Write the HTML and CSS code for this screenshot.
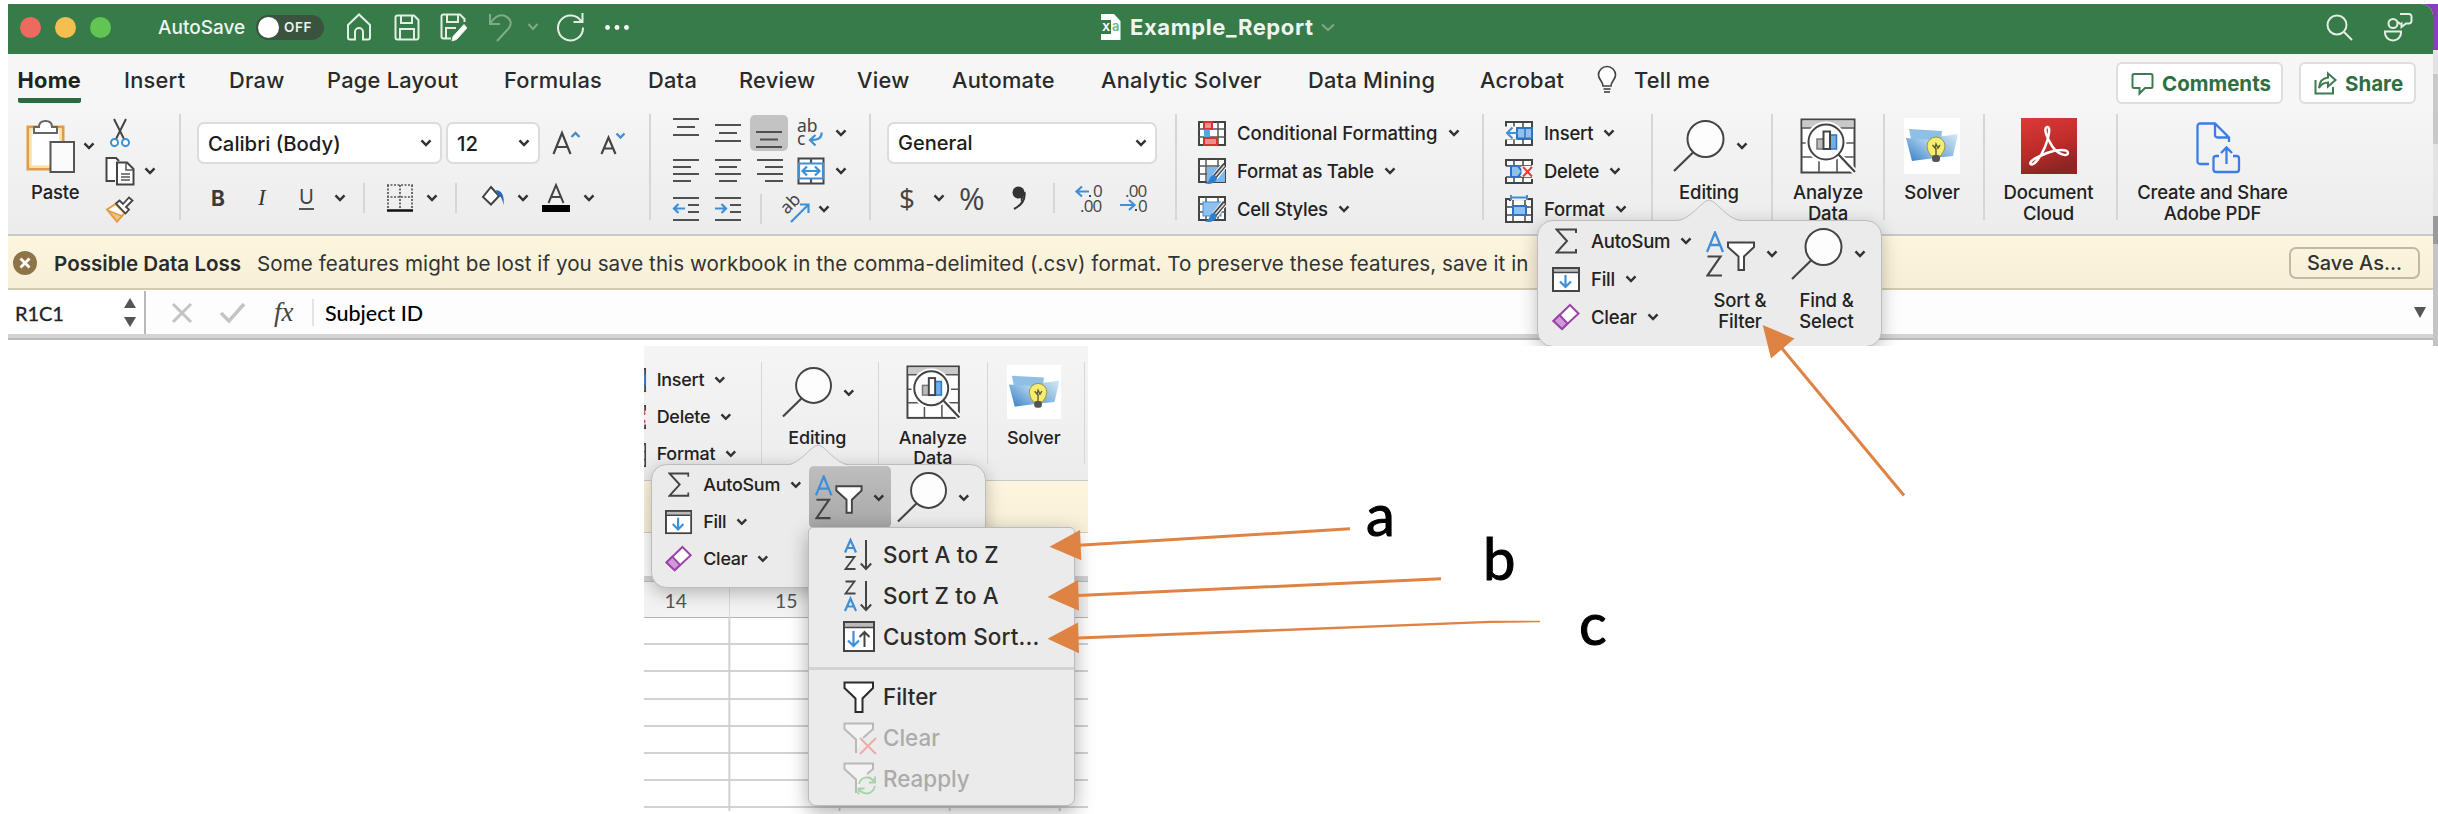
FILE: index.html
```html
<!DOCTYPE html>
<html lang="en">
<head>
<meta charset="utf-8">
<title>Example_Report</title>
<link rel="stylesheet" href="styles.css">
</head>
<body>
<svg class="sprite" aria-hidden="true">
  <defs>
    <linearGradient id="g-blue" x1="0" y1="1" x2="1" y2="0"><stop offset="0" stop-color="#2f7dc6"/><stop offset="1" stop-color="#cfe6f6"/></linearGradient>
    <linearGradient id="g-red" x1="0" y1="0" x2="0.3" y2="1"><stop offset="0" stop-color="#dc3a36"/><stop offset="0.6" stop-color="#bd2c2a"/><stop offset="1" stop-color="#8e2523"/></linearGradient>
  </defs>
  <symbol id="chev" viewBox="0 0 12 8"><path d="M1.5 1.4 6 6 10.500 1.400" fill="none" stroke="currentColor" stroke-width="2.5"/></symbol>
  <symbol id="lens" viewBox="0 0 52 52"><circle cx="32.500" cy="19" r="18" fill="#fdfdfd" stroke="#444" stroke-width="2"/><path d="M20 32.500 1 51" stroke="#444" stroke-width="2.200"/></symbol>
  <symbol id="analyze" viewBox="0 0 56 56"><rect x="1.500" y="1.500" width="53" height="53" fill="#fff" stroke="#444" stroke-width="2"/><rect x="2.500" y="2.500" width="51" height="7" fill="#c9c9c9"/><path d="M2 10H54M2 25H9M46 25H54M2 39H54M19 43V54M37 40V54" stroke="#555" stroke-width="1.600"/><circle cx="26" cy="24" r="18" fill="#fdfdfd" stroke="#fff" stroke-width="5"/><path d="M38 36 56 55" stroke="#fff" stroke-width="6"/><circle cx="26" cy="24" r="17.500" fill="#fdfdfd" stroke="#444" stroke-width="2"/><path d="M38.500 36.500 55 54" stroke="#444" stroke-width="2.200"/><rect x="17" y="21" width="7" height="10" fill="#bbb" stroke="#777" stroke-width="1.500"/><rect x="30" y="17" width="6.500" height="14" fill="#6fb0e8" stroke="#2f74c0" stroke-width="1.500"/><rect x="23.500" y="13.500" width="6.500" height="17.500" fill="#fff" stroke="#444" stroke-width="2"/></symbol>
  <symbol id="solver" viewBox="0 0 56 56"><rect width="56" height="56" fill="#fff"/><path d="M5 11 38 13 36 34 10 36Z" fill="#8ebfe5"/><path d="M2 20 28 22 31 40 8 43Z" fill="url(#g-blue)"/><path d="M26 20 54 16 49 38 30 40Z" fill="url(#g-blue)" opacity=".8"/><path d="M27 38Q23 33 23 28A8.700 8.700 0 0 1 41 28Q41 33 36.500 38Z" fill="#f5ec70" stroke="#9c9440" stroke-width="1"/><path d="M28.500 27 31 30 32 26 34 30 36 27M32 30V38" fill="none" stroke="#5d5a30" stroke-width="1.400"/><rect x="28" y="37" width="8" height="7" rx="3" fill="#555"/></symbol>
  <symbol id="ins" viewBox="0 0 28 25"><rect x="1" y="1" width="26" height="23" fill="#fff" stroke="#444" stroke-width="2"/><path d="M9 1V8M18 1V24M9 18V24M1 18H27M1 7H27" stroke="#444" stroke-width="1.500"/><rect x="-1" y="5.500" width="14" height="13" fill="#f4f4f4"/><rect x="12" y="7" width="15" height="10.500" fill="#8fc0ee" stroke="#2b73c4" stroke-width="2"/><path d="M20 7V17.500" stroke="#2b73c4" stroke-width="1.500"/><path d="M13 12H2M7.500 6.500 2 12 7.500 17.500" fill="none" stroke="#3f8fd6" stroke-width="2"/></symbol>
  <symbol id="del" viewBox="0 0 28 25"><path d="M1 7V1H27V6M1 18V24H27V20" fill="#fff" stroke="#444" stroke-width="2"/><path d="M1 7H27M1 18H27M9 1V7M18 1V7M9 18V24M18 18V24" stroke="#444" stroke-width="1.500"/><path d="M6 7H13L17 12.500 13 18H6Z" fill="#8fc0ee" stroke="#2b73c4" stroke-width="2"/><rect x="16.500" y="7" width="11.500" height="11" fill="#f4f4f4"/><path d="M18 8 27 17.500M27 8 18 17.500" stroke="#e2413b" stroke-width="2"/></symbol>
  <symbol id="fmt" viewBox="0 0 28 28"><path d="M5 4V27M5 4H1V27H27V4H23" fill="none" stroke="#444" stroke-width="2"/><path d="M2 6H26V26H2Z" fill="#fff"/><path d="M8 5V27M20 5V27M1 12H27M1 20H27" stroke="#444" stroke-width="1.500"/><rect x="8" y="11" width="13" height="9" fill="#8fc0ee" stroke="#2b73c4" stroke-width="2"/><path d="M6 2.500H22M6 0V5M22 0V5" stroke="#3f8fd6" stroke-width="2"/></symbol>
  <symbol id="sigma" viewBox="0 0 22 26"><path d="M21 5V1.500H1.500L12 13 1.500 24.500H21V21" fill="none" stroke="#444" stroke-width="2"/></symbol>
  <symbol id="fill" viewBox="0 0 28 25"><rect x="1" y="1" width="26" height="23" fill="#fff" stroke="#444" stroke-width="2"/><rect x="2" y="2" width="24" height="3" fill="#bbb"/><path d="M2 5.500H26" stroke="#444" stroke-width="1.500"/><path d="M13.500 8V20M8 14.500 13.500 20 19 14.500" fill="none" stroke="#3f8fd6" stroke-width="2.200"/></symbol>
  <symbol id="eraser" viewBox="0 0 28 28"><path d="M18 2 26.500 10.500 10 26 1.500 18Z" fill="#fff" stroke="#9a44a8" stroke-width="2"/><path d="M7.500 12 15.500 20.500 10 26 1.500 18Z" fill="#cf9ad8" stroke="#9a44a8" stroke-width="2"/></symbol>
  <symbol id="azfunnel" viewBox="0 0 50 47"><path d="M1 21 9 1.500 17 21M4 14H14" fill="none" stroke="#3f8fd6" stroke-width="2.300"/><path d="M1.500 25.500H14.500L1.500 44.500H16" fill="none" stroke="#444" stroke-width="2.200"/><path d="M22 11.500H48V16L38 25.500V39H32.500V25.500L22 16Z" fill="#fff" stroke="#444" stroke-width="2"/></symbol>
  <symbol id="funnel" viewBox="0 0 32 32"><path d="M1.500 1.500H30V7L19.500 17.500V31H12.500V17.500L1.500 7Z" fill="#fff" stroke="currentColor" stroke-width="2"/></symbol>
  <symbol id="down" viewBox="0 0 12 32"><path d="M6 1V30M.8 24.500 6 30 11.200 24.500" fill="none" stroke="#444" stroke-width="2"/></symbol>
  <symbol id="grid" viewBox="0 0 28 25"><rect x="1" y="1" width="26" height="23" fill="#fff" stroke="#444" stroke-width="2"/><path d="M8 1V24M20 1V24M1 8H27M1 16H27" stroke="#555" stroke-width="1.500"/></symbol>
  <symbol id="brushlet" viewBox="0 0 22 22"><path d="M20.500 2 11 14" stroke="#fff" stroke-width="6.500"/><path d="M21 1.500 10.500 14" stroke="#444" stroke-width="4.500"/><path d="M20.500 2.500 11 13.500" stroke="#ddd" stroke-width="1.500"/><path d="M10 12Q14 14 12 17.500 9 22 1 20.500 5 18.500 5.500 16 7 12 10 12Z" fill="#2f7fd0"/></symbol>
</svg>

<div class="page">
<div class="shot">
<div class="window">
  <header class="titlebar">
    <div class="lights"><i class="red"></i><i class="yellow"></i><i class="green"></i></div>
    <span class="autosave">AutoSave</span>
    <span class="toggle"><i></i><b>OFF</b></span>
    <svg class="ti-home" width="26" height="28" viewBox="0 0 26 28"><path d="M2 12 13 1.500 24 12V24.500A2 2 0 0 1 22 26.500H17V19A4 4 0 0 0 9 19V26.500H4A2 2 0 0 1 2 24.500Z"/></svg>
    <svg class="ti-save" width="26" height="27" viewBox="0 0 26 27"><path d="M1.500 3A2 2 0 0 1 3.500 1.500H20L24.500 6V23A2 2 0 0 1 22.500 25.500H3.500A2 2 0 0 1 1.500 23.500ZM7 1.500V9H18V1.500M6 25.500V15H20V25.500"/></svg>
    <svg class="ti-edit" width="28" height="29" viewBox="0 0 28 29"><path d="M11 25.500H3.500A2 2 0 0 1 1.500 23.500V3A2 2 0 0 1 3.500 1.500H20L24.500 6V9M7 1.500V9H18V1.500M6 25.500V15H16"/><path d="M24 11.500 13 23.500 12 28 16.500 26.500 27 15Z" fill="#fff" stroke-width="1"/></svg>
    <svg class="ti-undo dim" width="25" height="29" viewBox="0 0 25 29"><path d="M2 1V11H12M2 11C7 3 13 1 18 3.500S24 11 21 15L9 28"/></svg>
    <svg class="ti-uchev dim" width="12" height="8"><path d="M1.500 1 6 6 10.500 1"/></svg>
    <svg class="ti-redo" width="29" height="30" viewBox="0 0 29 30"><path d="M25.500 10A12.500 12.500 0 1 0 27 15.500M26.500 1V10H17.500"/></svg>
    <svg class="ti-dots" width="24" height="5"><g fill="#fff" stroke="none"><circle cx="2.500" cy="2.500" r="2.400"/><circle cx="12" cy="2.500" r="2.400"/><circle cx="21.500" cy="2.500" r="2.400"/></g></svg>
    <svg class="ti-doc" width="21" height="26" viewBox="0 0 21 26"><path d="M1 0H14L20.500 7V26H1Z" fill="#fff" stroke="none"/><rect y="6" width="11" height="14" fill="#377b49" stroke="none"/><text x="2" y="16.500" class="doc-x">X</text><text x="12" y="17" class="doc-a">a</text></svg>
    <span class="doc-title">Example_Report</span>
    <svg class="ti-tchev dim" width="14" height="9"><path d="M1 1.500 7 7 13 1.500"/></svg>
    <svg class="ti-search" width="27" height="27" viewBox="0 0 27 27"><circle cx="11" cy="11" r="9.500"/><path d="M18 18 26 26"/></svg>
    <svg class="ti-user" width="30" height="30" viewBox="0 0 30 30"><circle cx="10" cy="11.500" r="4.500"/><path d="M2 19.500H18V21A8 7.500 0 0 1 2 21ZM17 2H26A2.500 2.500 0 0 1 28.500 4.500V9A2.500 2.500 0 0 1 26 11.500H23L18.500 15V11.500A2 2 0 0 1 15.500 9.500"/></svg>
  </header>

  <nav class="tabs">
    <span class="tab active">Home</span><span class="tab">Insert</span><span class="tab">Draw</span><span class="tab">Page Layout</span><span class="tab">Formulas</span><span class="tab">Data</span><span class="tab">Review</span><span class="tab">View</span><span class="tab">Automate</span><span class="tab">Analytic Solver</span><span class="tab">Data Mining</span><span class="tab">Acrobat</span>
    <svg class="bulb" width="20" height="28" viewBox="0 0 20 28"><path d="M6 20C6 15 1.500 14 1.500 9A8.500 8.500 0 0 1 18.500 9C18.500 14 14 15 14 20Z" fill="#fff" stroke="#444" stroke-width="1.700"/><path d="M6.500 23H13.500M7 26H13" stroke="#666" stroke-width="2"/></svg>
    <span class="tab">Tell me</span>
    <span class="pill comments"><svg width="23" height="23" viewBox="0 0 23 23"><path d="M3 2H20A1.500 1.500 0 0 1 21.500 3.500V14.500A1.500 1.500 0 0 1 20 16H14L8.500 21.500V16H3A1.500 1.500 0 0 1 1.500 14.500V3.500A1.500 1.500 0 0 1 3 2Z"/></svg>Comments</span>
    <span class="pill share"><svg width="23" height="23" viewBox="0 0 23 23"><path d="M1.500 8V21.500H19V15M14 1.500 21.500 8 14 14.500V10.500Q8 10.500 5 16 5.500 6.500 14 5.500Z"/></svg>Share</span>
  </nav>

  <div class="ribbon">
    <section class="group clip">
      <div class="big">
        <div class="face"><svg width="49" height="54" viewBox="0 0 49 54"><rect x="2" y="8" width="35" height="42" fill="#fff" stroke="#e59a45" stroke-width="3"/><rect x="4.500" y="10.500" width="30" height="37" fill="none" stroke="#fbe3a6" stroke-width="2.500"/><path d="M8 14V8H13Q13 2 19.500 2T26 8H31V14Z" fill="#fff" stroke="#666" stroke-width="2"/><rect x="24.500" y="23" width="23.500" height="30" fill="#fbfbfb" stroke="#555" stroke-width="2"/></svg><svg class="chev"><use href="#chev"/></svg></div>
        <div class="label paste-label">Paste</div>
      </div>
      <div class="rows">
        <div class="row"><svg class="scissors" width="20" height="30" viewBox="0 0 20 30"><path d="M4 1 14 21M16 1 6 21" fill="none" stroke="#444" stroke-width="2"/><circle cx="4.500" cy="24.500" r="3.500" fill="#fff" stroke="#3f8fd6" stroke-width="2"/><circle cx="15.500" cy="24.500" r="3.500" fill="#fff" stroke="#3f8fd6" stroke-width="2"/></svg></div>
        <div class="row"><svg width="30" height="30" viewBox="0 0 30 30"><path d="M10 25H1.500V2H11L14 5" fill="#fff" stroke="#444" stroke-width="2"/><path d="M12 6.500H22L28.500 13V28.500H12Z" fill="#fff" stroke="#444" stroke-width="2"/><path d="M21 6.500V14H28.500M16 18H25M16 21H25M16 24H25" fill="none" stroke="#555" stroke-width="1.500"/></svg><svg class="chev"><use href="#chev"/></svg></div>
        <div class="row"><svg width="30" height="28" viewBox="0 0 30 28"><path d="M2 14.500 10.500 9 19.500 18 12 26.500Z" fill="#fff" stroke="#e59a45" stroke-width="2"/><path d="M3 15.500 17 21 12 26.500Z" fill="#f3c27c" stroke="#e59a45" stroke-width="1.500"/><path d="M11 8.500 14.500 5.500 18 9 24 2.500 27.500 5.500 21 12 24 14.500 20.500 18.500Z" fill="#fff" stroke="#444" stroke-width="1.800"/></svg></div>
      </div>
    </section>

    <section class="group font">
      <div class="combos"><span class="combo face-name">Calibri (Body)<svg class="chev"><use href="#chev"/></svg></span><span class="combo size">12<svg class="chev"><use href="#chev"/></svg></span>
        <svg width="29" height="26" viewBox="0 0 29 26"><path d="M1.500 24 10 3 18.500 24M4.500 17H15.500" fill="none" stroke="#444" stroke-width="2.200"/><path d="M19.500 7 23.500 3 27.500 7" fill="none" stroke="#3f8fd6" stroke-width="2.400"/></svg>
        <svg width="26" height="26" viewBox="0 0 26 26"><path d="M1.500 24 8.500 7.500 15.500 24M4 18.500H13" fill="none" stroke="#444" stroke-width="2.200"/><path d="M16.500 3.500 20.500 7.500 24.500 3.500" fill="none" stroke="#3f8fd6" stroke-width="2.400"/></svg></div>
      <div class="tools font-tools">
        <b class="g-b">B</b><i class="g-i">I</i><span class="g-u">U</span><svg class="chev"><use href="#chev"/></svg><i class="rule"></i>
        <svg width="28" height="28" viewBox="0 0 28 28"><path d="M1 1H27M1 13H27M2 1V24M14 1V24M26 1V24" stroke="#555" stroke-width="1.700" stroke-dasharray="2 1.500"/><path d="M1 26.500H27" stroke="#111" stroke-width="2.500"/></svg><svg class="chev"><use href="#chev"/></svg><i class="rule"></i>
        <svg class="bucket" width="26" height="24" viewBox="0 0 26 24"><path d="M10 3 18 12 10 20.500 2 13Z" fill="#fff" stroke="#444" stroke-width="2"/><path d="M15 6Q24 7 22.500 21 21 12 16 10Z" fill="#2b66b8"/></svg><svg class="chev"><use href="#chev"/></svg>
        <svg width="28" height="30" viewBox="0 0 28 30"><path d="M6.500 20 14 2 21.500 20M9 14H19" fill="none" stroke="#444" stroke-width="2"/><rect y="22" width="28" height="7" fill="#000"/></svg><svg class="chev"><use href="#chev"/></svg>
      </div>
    </section>

    <section class="group align">
      <div class="row align-row">
        <svg width="26" height="32"><path d="M0 2H26M4 10H22M0 18H26"/></svg>
        <svg width="26" height="32"><path d="M0 8H26M4 16H22M0 24H26"/></svg>
        <span class="picked"><svg width="26" height="32"><path d="M0 15H26M4 22.500H22M0 30H26"/></svg></span>
        <svg width="27" height="32" viewBox="0 0 27 32"><text x="0" y="14.500" class="ic-text">ab</text><text x="0" y="28" class="ic-text">c</text><path d="M24.500 15.500Q25.500 23 14 23M18.500 18 13 23 18.500 28.500" fill="none" class="blue"/></svg>
        <svg class="chev"><use href="#chev"/></svg>
      </div>
      <div class="row align-row">
        <svg width="26" height="26"><path d="M0 2H26M0 9H18M0 16H26M0 23H18"/></svg>
        <svg width="26" height="26"><path d="M0 2H26M4 9H22M0 16H26M4 23H22"/></svg>
        <svg class="in-box" width="26" height="26"><path d="M0 2H26M8 9H26M0 16H26M8 23H26"/></svg>
        <svg class="merge" width="28" height="28" viewBox="0 0 28 28"><rect x="1.500" y="1.500" width="25" height="25" fill="#fff"/><path d="M14 1V6M14 22V27" /><path d="M2 6.500H26V21.500H2ZM6 14H22M10 9.500 5.500 14 10 18.500M18 9.500 22.500 14 18 18.500" fill="none" class="blue"/></svg>
        <svg class="chev"><use href="#chev"/></svg>
      </div>
      <div class="row align-row orient-row">
        <svg width="26" height="26"><path d="M0 2H26M15 9H26M15 16H26M0 24H26"/><path class="blue" fill="none" d="M12 12.500H1M5.500 8 1 12.500 5.500 17"/></svg>
        <svg width="26" height="26"><path d="M0 2H26M15 9H26M15 16H26M0 24H26"/><path class="blue" fill="none" d="M0 12.500H11M6.500 8 11 12.500 6.500 17"/></svg>
        <i class="rule"></i>
        <svg width="32" height="30" viewBox="0 0 32 30"><text x="7" y="21" class="ic-text" transform="rotate(-45 7 21)">ab</text><path class="blue" fill="none" d="M11 28 28 11M20 10.500H28.500V19"/></svg>
        <svg class="chev"><use href="#chev"/></svg>
      </div>
    </section>

    <section class="group number">
      <div class="combos"><span class="combo general">General<svg class="chev"><use href="#chev"/></svg></span></div>
      <div class="tools num-tools"><span class="g-dollar">$</span><svg class="chev"><use href="#chev"/></svg><span class="g-pct">%</span>
        <svg width="14" height="24" viewBox="0 0 14 24"><circle cx="6.500" cy="6.500" r="6" fill="#333"/><path d="M12.500 6Q14 17 2 23" fill="none" stroke="#333" stroke-width="2"/><path d="M8 2 13 7 9 17Z" fill="#333"/></svg>
        <i class="rule"></i>
        <svg width="28" height="30" viewBox="0 0 28 30"><text x="18" y="14" class="ic-num">0</text><text x="5" y="28.500" class="ic-num">.00</text><rect x="14" y="12" width="2" height="2" fill="#444"/><path d="M14 8.500H1.500M7 3.500 1.500 8.500 7 13.500" fill="none" class="blue"/></svg>
        <svg width="28" height="30" viewBox="0 0 28 30"><text x="5" y="14" class="ic-num">.00</text><text x="18" y="28.500" class="ic-num">0</text><rect x="15" y="26" width="2" height="2" fill="#444"/><path d="M0 22H14M9 17 14.500 22 9 27" fill="none" class="blue"/></svg></div>
    </section>

    <section class="group styles">
      <div class="row cmd"><svg width="28" height="25"><use href="#grid"/><rect x="6" y="1" width="8" height="7" fill="#ee8f8c" stroke="#d6352f" stroke-width="2"/><rect x="6" y="8.500" width="6" height="8" fill="#58a5e6"/><rect x="6" y="17" width="13" height="7" fill="#ee8f8c" stroke="#d6352f" stroke-width="2"/></svg><span>Conditional Formatting</span><svg class="chev"><use href="#chev"/></svg></div>
      <div class="row cmd snug"><svg width="28" height="26"><use href="#grid" width="28" height="25"/><rect x="9" y="9" width="18" height="15" fill="#7db9ee"/><use href="#brushlet" x="6" y="5" width="22" height="22"/></svg><span>Format as Table</span><svg class="chev"><use href="#chev"/></svg></div>
      <div class="row cmd snug"><svg width="28" height="26"><use href="#grid" width="28" height="25"/><rect x="5" y="6" width="18" height="14" fill="#8fc0ee" stroke="#3f8fd6"/><use href="#brushlet" x="6" y="5" width="22" height="22"/></svg><span>Cell Styles</span><svg class="chev"><use href="#chev"/></svg></div>
    </section>

    <section class="group cells">
      <div class="row cmd snug"><svg width="28" height="25"><use href="#ins"/></svg><span>Insert</span><svg class="chev"><use href="#chev"/></svg></div>
      <div class="row cmd snug"><svg width="28" height="25"><use href="#del"/></svg><span>Delete</span><svg class="chev"><use href="#chev"/></svg></div>
      <div class="row cmd snug"><svg width="28" height="28"><use href="#fmt"/></svg><span>Format</span><svg class="chev"><use href="#chev"/></svg></div>
    </section>
    <section class="group big editing"><div class="face"><svg width="52" height="52"><use href="#lens"/></svg><svg class="chev"><use href="#chev"/></svg></div><div class="label">Editing</div></section>
    <section class="group big analyze"><div class="face"><svg width="56" height="56"><use href="#analyze"/></svg></div><div class="label">Analyze<br>Data</div></section>
    <section class="group big solver"><div class="face"><svg width="56" height="56"><use href="#solver"/></svg></div><div class="label">Solver</div></section>
    <section class="group big cloud"><div class="face"><svg width="56" height="56" viewBox="0 0 56 56"><rect width="56" height="56" fill="url(#g-red)"/><path d="M26 9C22 10 26 20 31 28 37 37 47 39 47 35 47 31 36 31 26 35 16 39 8 43 9.500 46 12 49 20 39 24 29 28 19 30 8 26 9Z" fill="none" stroke="#fff" stroke-width="2.500"/></svg></div><div class="label">Document<br>Cloud</div></section>
    <section class="group big pdf"><div class="face"><svg width="45" height="52" viewBox="0 0 45 52"><g fill="none" stroke="#3b7de6" stroke-width="2.300"><path d="M13 42H4A2.500 2.500 0 0 1 1.500 39.500V4A2.500 2.500 0 0 1 4 1.500H19L33 15.500V20M19 1.500V13A2.500 2.500 0 0 0 21.500 15.500H33"/><path d="M23 34H20A2.500 2.500 0 0 0 17.500 36.500V47.500A2.500 2.500 0 0 0 20 50H40.500A2.500 2.500 0 0 0 43 47.500V36.500A2.500 2.500 0 0 0 40.500 34H37M30.500 42V25.500M25 31 30.500 25.500 36 31"/></g></svg></div><div class="label">Create and Share<br>Adobe PDF</div></section>
  </div>

  <div class="warning"><svg width="26" height="26" viewBox="0 0 26 26"><circle cx="13" cy="13" r="12" fill="#8f7449"/><path d="M8.500 8.500 17.500 17.500M17.500 8.500 8.500 17.500" stroke="#fff" stroke-width="2.800"/></svg><strong>Possible Data Loss</strong><span class="warn-text">Some features might be lost if you save this workbook in the comma-delimited (.csv) format. To preserve these features, save it in</span><span class="save-as">Save As...</span></div>

  <div class="formula">
    <div class="namebox"><span>R1C1</span><svg width="12" height="30"><path d="M0 10 6 0 12 10ZM0 19H12L6 29Z" fill="#555"/></svg></div>
    <svg class="f-x" width="20" height="20"><path d="M1 1 19 19M19 1 1 19" stroke="#c4c4c4" stroke-width="3"/></svg>
    <svg class="f-ok" width="25" height="20"><path d="M1 10 9 18 24 1" fill="none" stroke="#c4c4c4" stroke-width="3.500"/></svg>
    <i class="fx">fx</i><span class="cell-text">Subject ID</span>
    <svg class="f-down" width="12" height="11"><path d="M0 0H12L6 11Z" fill="#555"/></svg>
  </div>
  <div class="strip"></div>

  <div class="popup popup-main">
    <svg class="beak" width="64" height="23" viewBox="0 0 64 23"><path d="M0 22C14 21 24 2 32 1 40 2 50 21 64 22V23H0Z" fill="#ebebeb"/><path d="M0 21.500C14 20.500 24 2 32 1 40 2 50 20.500 64 21.500" fill="none" stroke="#bdbdbd" stroke-width="1"/></svg>
    <div class="list">
      <div class="row cmd snug"><svg class="sig" width="22" height="26"><use href="#sigma"/></svg><span>AutoSum</span><svg class="chev"><use href="#chev"/></svg></div>
      <div class="row cmd snug"><svg width="28" height="25"><use href="#fill"/></svg><span>Fill</span><svg class="chev"><use href="#chev"/></svg></div>
      <div class="row cmd snug"><svg width="28" height="28"><use href="#eraser"/></svg><span>Clear</span><svg class="chev"><use href="#chev"/></svg></div>
    </div>
    <div class="pop-btn"><div class="pop-face"><svg width="50" height="47"><use href="#azfunnel"/></svg><svg class="chev"><use href="#chev"/></svg></div><div class="label">Sort &amp;<br>Filter</div></div>
    <div class="pop-btn find"><div class="pop-face"><svg width="52" height="52"><use href="#lens"/></svg><svg class="chev"><use href="#chev"/></svg></div><div class="label">Find &amp;<br>Select</div></div>
  </div>
</div>
</div>

<div class="detail">
  <div class="detail-view">
    <div class="ribbon">
      <section class="group cells">
        <div class="row cmd snug"><svg width="28" height="25"><use href="#ins"/></svg><span>Insert</span><svg class="chev"><use href="#chev"/></svg></div>
        <div class="row cmd snug"><svg width="28" height="25"><use href="#del"/></svg><span>Delete</span><svg class="chev"><use href="#chev"/></svg></div>
        <div class="row cmd snug"><svg width="28" height="28"><use href="#fmt"/></svg><span>Format</span><svg class="chev"><use href="#chev"/></svg></div>
      </section>
      <section class="group big editing"><div class="face"><svg width="52" height="52"><use href="#lens"/></svg><svg class="chev"><use href="#chev"/></svg></div><div class="label">Editing</div></section>
      <section class="group big analyze"><div class="face"><svg width="56" height="56"><use href="#analyze"/></svg></div><div class="label">Analyze<br>Data</div></section>
      <section class="group big solver"><div class="face"><svg width="56" height="56"><use href="#solver"/></svg></div><div class="label">Solver</div></section>
      <section class="group cloud"></section>
    </div>
    <div class="warning"></div>
    <div class="formula"></div>
    <div class="strip"></div>
    <div class="cols"><span>14</span><span>15</span><span></span><span></span><span></span></div>
    <div class="cells-grid"></div>
    <div class="popup popup-detail">
      <svg class="beak" width="64" height="23" viewBox="0 0 64 23"><path d="M0 22C14 21 24 2 32 1 40 2 50 21 64 22V23H0Z" fill="#ebebeb"/><path d="M0 21.500C14 20.500 24 2 32 1 40 2 50 20.500 64 21.500" fill="none" stroke="#bdbdbd" stroke-width="1"/></svg>
      <div class="list">
        <div class="row cmd snug"><svg class="sig" width="22" height="26"><use href="#sigma"/></svg><span>AutoSum</span><svg class="chev"><use href="#chev"/></svg></div>
        <div class="row cmd snug"><svg width="28" height="25"><use href="#fill"/></svg><span>Fill</span><svg class="chev"><use href="#chev"/></svg></div>
        <div class="row cmd snug"><svg width="28" height="28"><use href="#eraser"/></svg><span>Clear</span><svg class="chev"><use href="#chev"/></svg></div>
      </div>
      <div class="pop-btn"><div class="pop-face pressed"><svg width="50" height="47"><use href="#azfunnel"/></svg><svg class="chev"><use href="#chev"/></svg></div></div>
      <div class="pop-btn find"><div class="pop-face"><svg width="52" height="52"><use href="#lens"/></svg><svg class="chev"><use href="#chev"/></svg></div></div>
    </div>
  </div>
  <div class="menu">
    <div class="item"><svg width="32" height="32"><path d="M2 13.500 7.500 1 13 13.500M4 9H11" fill="none" stroke="#3f8fd6" stroke-width="2.200"/><path d="M2.500 18H11.500L2.500 30H12.500" fill="none" stroke="#444" stroke-width="1.800"/><use href="#down" x="17" y="0" width="12" height="32"/></svg>Sort A to Z</div>
    <div class="item"><svg width="32" height="32"><path d="M2.500 1.500H11.500L2.500 13.500H12.500" fill="none" stroke="#444" stroke-width="1.800"/><path d="M2 31 7.500 18.500 13 31M4 26.500H11" fill="none" stroke="#3f8fd6" stroke-width="2.200"/><use href="#down" x="17" y="0" width="12" height="32"/></svg>Sort Z to A</div>
    <div class="item"><svg width="32" height="31"><rect x="1" y="1" width="30" height="29" fill="#fff" stroke="#444" stroke-width="2"/><rect x="2" y="2" width="28" height="4" fill="#bbb"/><path d="M2 6.500H30" stroke="#444" stroke-width="1.500"/><path d="M10.500 10V25M5 19.500 10.500 25 16 19.500" fill="none" stroke="#3f8fd6" stroke-width="2.200"/><path d="M21.500 26V11M16.500 16 21.500 11 26.500 16" fill="none" stroke="#444" stroke-width="2"/></svg>Custom Sort...</div>
    <hr>
    <div class="item tight"><svg width="32" height="32"><use href="#funnel"/></svg>Filter</div>
    <div class="item tight off"><svg width="33" height="32"><path d="M13 31V17.500L1.500 7V1.500H30V7L20 16" fill="#f3f3f3" stroke="#b9b9b9" stroke-width="2"/><path d="M17 16 33 32M33 16 17 32" stroke="#efaaa6" stroke-width="1.800"/></svg>Clear</div>
    <div class="item tight off"><svg width="33" height="33"><path d="M13 31V17.500L1.500 7V1.500H30V7L24 12" fill="#f3f3f3" stroke="#b9b9b9" stroke-width="2"/><path d="M16 22Q18 15 25 15.500 29 16 31.500 20M32 14.500V20.500H26M32 24Q30 31 24 31.500 19 31.500 16 27M15.500 32.500V26.500H21.500" fill="none" stroke="#a5d3a8" stroke-width="1.800"/></svg>Reapply</div>
  </div>
</div>

<svg class="arrows" width="2438" height="814" viewBox="0 0 2438 814">
  <g fill="#df8344" stroke="none"><path d="M1049.500 546.700 1080 530 1081.300 560.300Z"/><path d="M1047.500 597 1078 580 1079 610.800Z"/><path d="M1047.500 638.700 1078 622.400 1079 653.200Z"/><path d="M1762.700 325 1794.500 338.500 1771 358.500Z"/><path d="M1078 636.500 1490 620.700 1540 620.700V622.300L1490 623 1078 639.500Z"/></g>
  <g stroke="#df8344" stroke-width="3"><path d="M1079 545.200 1350 528.800M1078 595.500 1441 578.800M1780 346 1904 495.500"/></g>
</svg>
<span class="note note-a">a</span><span class="note note-b">b</span><span class="note note-c">c</span>
</div>
</body>
</html>
```
FILE: styles.css
```css
* { box-sizing: border-box; }
body { margin: 0; background: #fff; font-family: Inter, "Liberation Sans", sans-serif; color: #222; }
svg { display: block; flex: none; overflow: visible; }
.sprite { position: absolute; width: 0; height: 0; }
.page { position: relative; width: 2438px; height: 814px; overflow: hidden; padding-top: 4px; }
.chev { width: 12px; height: 8px; color: #333; }

.shot { margin-left: 8px; height: 342px; background: linear-gradient(#8b3fb5 0 46px, #e3e3e3 46px 70px, #c9c9c9 70px 140px, #e4e4e4 140px 212px, #9a9a9a 212px 240px, #c4c4c4 240px); overflow: hidden; }
.window { position: relative; width: 2425px; height: 342px; border-radius: 0 12px 0 0; overflow: hidden; background: #fff; }

.titlebar { display: flex; align-items: center; height: 50px; padding-bottom: 4px; background: #377b49; color: #eef4ef; }
.titlebar svg { fill: none; stroke: #e4eee6; stroke-width: 2; }
.titlebar .dim { opacity: .42; }
.lights { display: flex; gap: 14px; margin-left: 12px; }
.lights i { width: 21px; height: 21px; border-radius: 50%; }
.red { background: #ed6a5e; }
.yellow { background: #f5bf4f; }
.green { background: #61c554; }
.autosave { width: 98px; margin-left: 47px; font-size: 19px; font-weight: 500; }
.toggle { display: flex; align-items: center; width: 68px; height: 25px; border-radius: 13px; background: #39533f; }
.toggle i { width: 21px; height: 21px; margin-left: 2px; border-radius: 50%; background: #fff; }
.toggle b { margin-left: 5px; font-size: 13.500px; font-weight: 600; letter-spacing: .6px; }
.ti-home { margin-left: 22px; }
.ti-save { margin-left: 22px; }
.ti-edit { margin-left: 20px; }
.ti-undo { margin-left: 20px; }
.ti-uchev { margin-left: 14px; }
.ti-redo { margin-left: 17px; }
.ti-dots { margin-left: 20px; }
.ti-doc { margin-left: 471px; }
.doc-x { font: 700 11px Inter, sans-serif; fill: #fff; stroke: none; }
.doc-a { font: 600 13px Inter, sans-serif; fill: #6db58a; stroke: none; }
.doc-title { width: 191px; margin-left: 9px; font-size: 22px; font-weight: 700; letter-spacing: .6px; white-space: nowrap; }
.ti-search { margin-left: 991px; }
.ti-user { margin-left: 30px; }

.tabs { display: grid; grid-template-columns: 106.500px 105px 98px 177px 144px 91px 118px 95px 149px 207px 172px 117px 37px 483px 183px 116px; height: 58px; padding-left: 9.500px; background: #f6f6f6; font-size: 21.800px; font-weight: 500; letter-spacing: .25px; color: #2a2a2a; white-space: nowrap; }
.tab { justify-self: start; height: 49px; padding-top: 13px; line-height: 26px; }
.active { font-weight: 700; color: #222; border-bottom: 5px solid #2a6b3c; border-radius: 0 0 2px 2px; }
.bulb { margin-top: 12px; }
.pill { display: flex; align-items: center; gap: 8px; height: 42px; margin-top: 8px; margin-left: -1px; padding-left: 13px; border: 2px solid #dedede; border-radius: 6px; background: #fff; color: #2f6e43; font-size: 20.500px; font-weight: 700; letter-spacing: 0; }
.pill svg { fill: none; stroke: #3d7b50; stroke-width: 2; }
.comments { width: 167px; }

.ribbon { display: flex; height: 124px; padding-top: 2px; background: linear-gradient(#f5f5f5, #ececec); border-bottom: 2px solid #c9c9c9; }
.group { height: 106px; border-left: 2px solid #d6d6d6; flex: none; }
.clip { display: flex; width: 171px; border-left: 0; padding-left: 18px; }
.font { width: 470px; }
.align { width: 220px; padding-left: 22px; }
.number { width: 306px; }
.styles { width: 307px; padding-left: 21px; }
.cells { width: 169px; padding-left: 21px; }
.big { display: flex; flex-direction: column; align-items: center; }
.face { display: flex; flex: none; align-items: center; gap: 11px; height: 68px; padding-bottom: 4px; }
.clip .face { gap: 8px; }
.label { font-size: 18.500px; font-weight: 500; line-height: 21px; text-align: center; white-space: nowrap; letter-spacing: -.15px; color: #222; }
.paste-label { align-self: flex-start; margin-left: 5px; }
.editing { width: 120px; padding-right: 4px; }
.editing .label { margin-left: -2px; }
.analyze { width: 112px; }
.solver { width: 100px; padding-right: 4px; }
.cloud { width: 133px; padding-right: 4px; }
.pdf { width: 193px; padding-right: 2px; }
.pdf .face { margin-left: 11px; padding-bottom: 0; }
.rows { margin-left: 10px; }
.row { display: flex; align-items: center; height: 38px; }
.clip .row { gap: 9px; }
.scissors { margin-left: 5px; }
.cmd { font-size: 18.500px; font-weight: 500; white-space: nowrap; }
.cmd span { margin: 0 11px; }
.snug span { margin-right: 10px; letter-spacing: -.25px; }

.combos { display: flex; align-items: center; margin: 8px 0 0 16px; height: 42px; }
.combo { display: flex; align-items: center; justify-content: space-between; height: 42px; padding: 0 8px 0 9px; border: 2px solid #dcdcdc; border-radius: 7px; background: #fff; font-size: 20.300px; font-weight: 500; color: #1c1c1c; }
.face-name { width: 245px; }
.size { width: 94px; margin-left: 4px; margin-right: 12px; }
.size + svg { margin-right: 19px; }
.general { width: 270px; font-size: 20px; }
.tools { display: grid; align-items: center; justify-items: start; height: 30px; margin-top: 19px; }
.font-tools { grid-template-columns: 46px 42px 35px 29px 23px 40px 29px 26px 36px 25px 41px 20px; margin-left: 30px; }
.num-tools { grid-template-columns: 34px 26px 53px 41px 22px 45px 30px; margin-left: 28px; }
.g-b { font-size: 21px; font-weight: 700; color: #3a3a3a; }
.g-i { font: italic 23px "Liberation Serif", serif; margin-left: 1px; color: #3a3a3a; }
.g-u { font-size: 20px; line-height: 21px; border-bottom: 2px solid #555; color: #444; }
.rule { width: 2px; height: 30px; background: #d6d6d6; }
.bucket { margin-top: -4px; }
.g-dollar { font: 28px "Open Sans", sans-serif; line-height: 30px; color: #444; }
.g-pct { font: 31px "Open Sans", sans-serif; line-height: 30px; color: #444; }
.align-row { display: grid; grid-template-columns: 42px 35px 47px 38px 12px; align-items: center; }
.align-row > svg path, .picked svg path { stroke: #505050; stroke-width: 2.200; }
.align-row .merge { margin-left: 0; }
.align-row .merge rect { stroke: #444; stroke-width: 2; }
.orient-row { grid-template-columns: 42px 45px 20px 38px 12px; }
.picked { display: flex; align-items: center; justify-content: center; width: 38px; height: 36px; border-radius: 5px; background: #c3c3c3; }
.in-box { margin-left: 7px; }
svg .blue, .align-row > svg path.blue { stroke: #3f8fd6; stroke-width: 2.200; }
.align-row > .chev path { stroke: currentColor; }
.ic-text { font: 17.500px "Noto Sans", sans-serif; fill: #444; }
.ic-num { font: 17px "Open Sans", sans-serif; fill: #444; letter-spacing: -.8px; }

.warning { display: flex; align-items: center; height: 54px; border-bottom: 2px solid #d2cbb4; background: linear-gradient(#fdf6df, #f7efd8); padding: 2px 0 0 4px; font-size: 20.600px; color: #333; white-space: nowrap; }
.warning strong { width: 203px; margin-left: 16px; padding-top: 1px; font-weight: 600; color: #2b2b2b; }
.warn-text { padding-top: 1px; letter-spacing: .06px; }
.save-as { width: 131px; height: 32px; margin-left: auto; margin-right: 13px; border: 2px solid #bfb9a6; border-radius: 7px; text-align: center; font-size: 20px; line-height: 29px; font-weight: 500; }

.formula { display: flex; align-items: center; height: 44px; padding-top: 1px; background: #fdfdfd; }
.namebox { display: flex; align-items: center; justify-content: space-between; width: 138px; height: 43px; padding: 0 8px 0 7px; border-right: 2px solid #b9b9b9; background: #fff; font: 20px Lato, sans-serif; color: #222; -webkit-text-stroke: .3px #222; }
.namebox span { letter-spacing: -.1px; }
.f-x { margin-left: 26px; }
.f-ok { margin-left: 28px; }
.fx { width: 40px; margin-left: 29px; border-right: 2px solid #e4e4e4; font: italic 27px/27px "Liberation Serif", serif; color: #444; }
.cell-text { margin-left: 11px; font: 500 21.500px Lato, sans-serif; color: #000; }
.f-down { margin-left: auto; margin-right: 7px; }
.strip { height: 6px; background: #d3d3d3; border-bottom: 2px solid #bababa; }

.popup { position: absolute; display: flex; width: 345px; height: 127px; padding: 1px 0 0 14px; border: 1px solid #bdbdbd; border-radius: 16px; background: #ebebeb; box-shadow: 0 5px 18px rgba(0, 0, 0, .25); }
.popup-main { left: 1529px; top: 216px; }
.beak { position: absolute; left: 139px; top: -22px; }
.list { width: 148px; }
.sig { margin: 0 3px; }
.pop-btn { width: 84px; }
.pop-face { display: flex; align-items: center; gap: 10px; height: 64px; padding-left: 6px; }
.pop-btn .label { margin-top: 4px; margin-right: 4px; }
.find .label { margin-left: 1px; margin-right: 0; }
.find .pop-face { gap: 11px; padding-left: 7px; }
.pressed { background: linear-gradient(#bebebe, #a8a8a8); border-radius: 5px; }

.detail { position: relative; margin-left: 644px; width: 444px; height: 465px; }
.detail-view { position: relative; zoom: .9706; width: 457.500px; height: 479px; overflow: hidden; background: #fff; }
.detail-view .ribbon { height: 139px; padding-top: 16px; margin-left: -48px; width: 520px; }
.popup-detail { left: 7px; top: 122px; }
.cols { display: grid; grid-template-columns: 89px 113.500px 113.500px 113.500px 40px; height: 37px; background: #f2f2f2; border-bottom: 2px solid #b5b5b5; font: 20px/40px Lato, sans-serif; color: #555; }
.cols span { border-right: 2px solid #dadada; padding-left: 21px; }
.cols span + span { padding-left: 46px; }
.cells-grid { height: 199px; background: repeating-linear-gradient(90deg, transparent 0 87px, #d0d0d0 87px 89px, transparent 89px 113.500px) 0 0 / 113.500px 100%, repeating-linear-gradient(transparent 0 26px, #d2d2d2 26px 28px) #fff; }
.menu { position: absolute; left: 164px; top: 181px; width: 267px; height: 279px; padding-top: 6px; border: 1px solid #bcbcbc; border-radius: 5px 5px 8px 8px; background: #ebebeb; box-shadow: 0 6px 20px rgba(0, 0, 0, .32); }
.item { display: flex; align-items: center; gap: 8px; height: 41px; padding-left: 34px; font-size: 22.400px; font-weight: 500; letter-spacing: .2px; color: #2b2b2b; white-space: nowrap; }
.item > svg { width: 32px; }
.tight { letter-spacing: 0; }
.off { color: #ababab; }
.menu hr { height: 3px; margin: 10px 0 6px; border: 0; background: #d3d3d3; }

.arrows { position: absolute; left: 0; top: 0; }
.note { position: absolute; font: 58px/70px Lato, sans-serif; color: #000; -webkit-text-stroke: 1px #000; }
.note-a { left: 1366px; top: 479px; }
.note-b { left: 1483px; top: 523px; }
.note-c { left: 1579px; top: 588px; }
```
